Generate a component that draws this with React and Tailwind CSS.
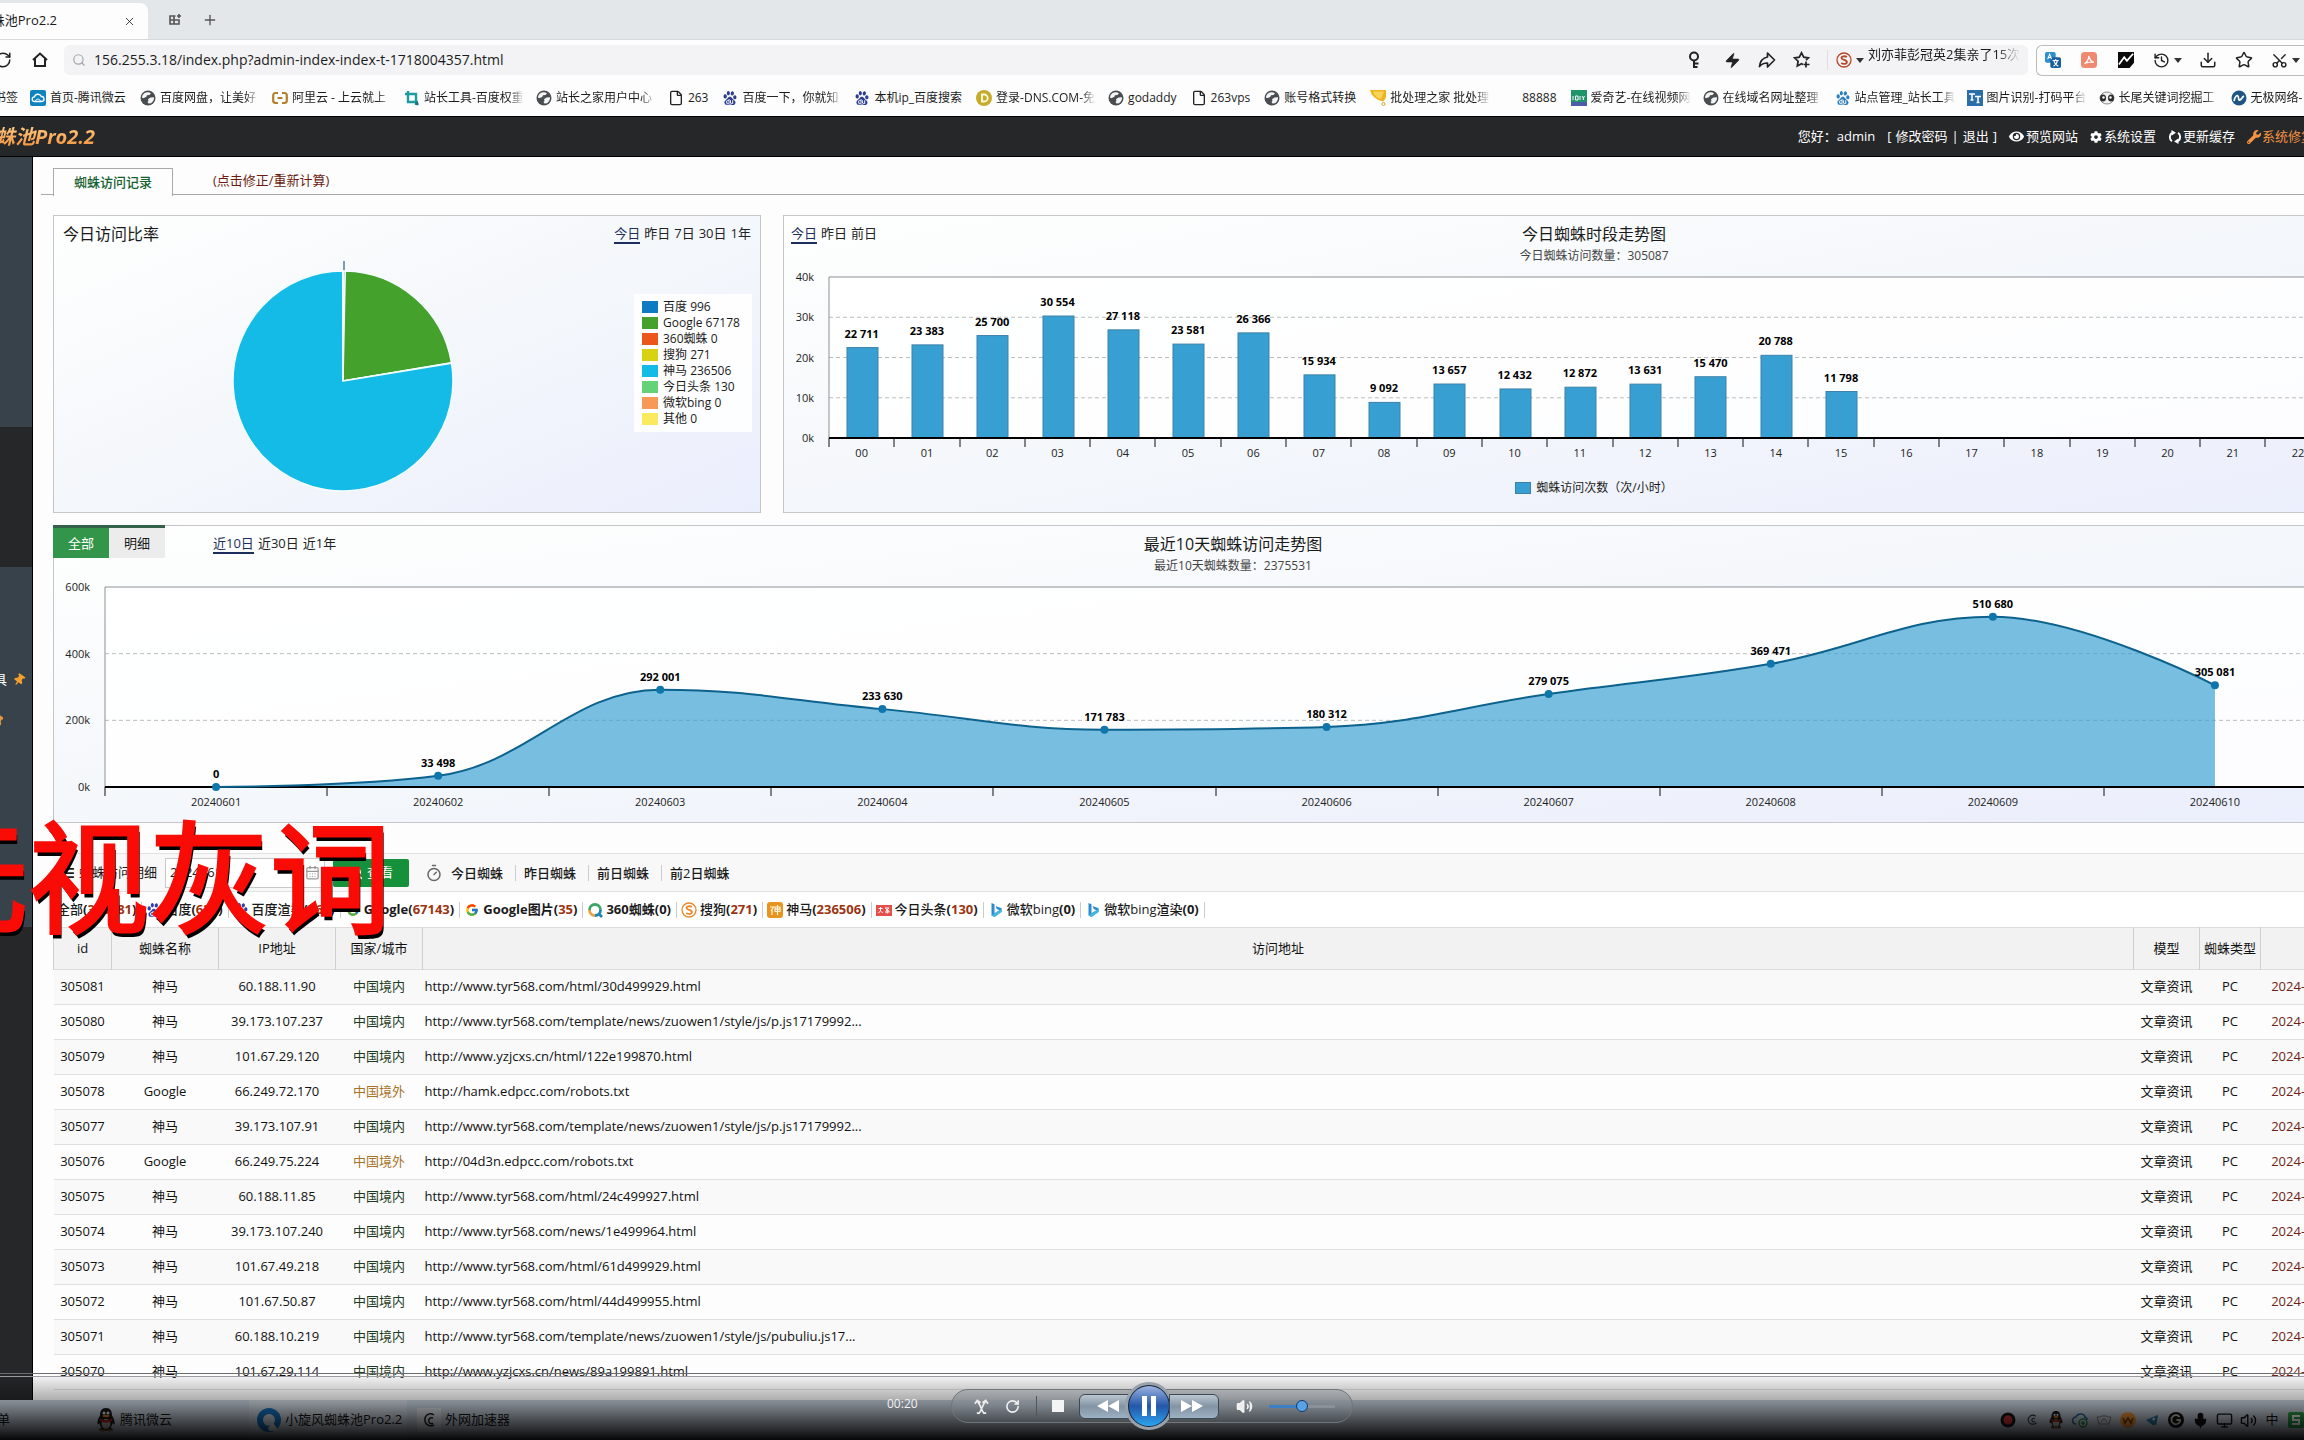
import { useLayoutEffect, useRef, useState } from 'react';
import {
  Search, X, Plus, RotateCw, File, Zap, Star, Download, Scissors, History, Volume2, Mic,
  Timer, AlignJustify, CalendarDays, Monitor,
} from 'lucide-react';
import { SiBaidu } from 'react-icons/si';
import { FcGoogle } from 'react-icons/fc';
import { FaEye, FaCog, FaWrench, FaThumbtack } from 'react-icons/fa';

const pieData = [
  { name: '百度', value: 996, color: '#0e7ac4' },
  { name: 'Google', value: 67178, color: '#44a12b' },
  { name: '360蜘蛛', value: 0, color: '#ed561b' },
  { name: '搜狗', value: 271, color: '#d8d312' },
  { name: '神马', value: 236506, color: '#14bbe6' },
  { name: '今日头条', value: 130, color: '#64d277' },
  { name: '微软bing', value: 0, color: '#f79a55' },
  { name: '其他', value: 0, color: '#fbea60' },
];

const hours = [22711, 23383, 25700, 30554, 27118, 23581, 26366, 15934, 9092, 13657, 12432, 12872, 13631, 15470, 20788, 11798];

const days = [
  ['20240601', 0],
  ['20240602', 33498],
  ['20240603', 292001],
  ['20240604', 233630],
  ['20240605', 171783],
  ['20240606', 180312],
  ['20240607', 279075],
  ['20240608', 369471],
  ['20240609', 510680],
  ['20240610', 305081],
];

const rows = [
  ['305081', '神马', '60.188.11.90', true, 'http://www.tyr568.com/html/30d499929.html'],
  ['305080', '神马', '39.173.107.237', true, 'http://www.tyr568.com/template/news/zuowen1/style/js/p.js17179992...'],
  ['305079', '神马', '101.67.29.120', true, 'http://www.yzjcxs.cn/html/122e199870.html'],
  ['305078', 'Google', '66.249.72.170', false, 'http://hamk.edpcc.com/robots.txt'],
  ['305077', '神马', '39.173.107.91', true, 'http://www.tyr568.com/template/news/zuowen1/style/js/p.js17179992...'],
  ['305076', 'Google', '66.249.75.224', false, 'http://04d3n.edpcc.com/robots.txt'],
  ['305075', '神马', '60.188.11.85', true, 'http://www.tyr568.com/html/24c499927.html'],
  ['305074', '神马', '39.173.107.240', true, 'http://www.tyr568.com/news/1e499964.html'],
  ['305073', '神马', '101.67.49.218', true, 'http://www.tyr568.com/html/61d499929.html'],
  ['305072', '神马', '101.67.50.87', true, 'http://www.tyr568.com/html/44d499955.html'],
  ['305071', '神马', '60.188.10.219', true, 'http://www.tyr568.com/template/news/zuowen1/style/js/pubuliu.js17...'],
  ['305070', '神马', '101.67.29.114', true, 'http://www.yzjcxs.cn/news/89a199891.html'],
];

const spaced = (n) => String(n).replace(/\B(?=(\d{3})+$)/g, ' ');

function useWidth() {
  const ref = useRef(null);
  const [width, setWidth] = useState(0);
  useLayoutEffect(() => {
    const el = ref.current;
    const update = () => setWidth(el.clientWidth);
    update();
    const ro = new ResizeObserver(update);
    ro.observe(el);
    return () => ro.disconnect();
  }, []);
  return [ref, width];
}

/* ---------- small icons ---------- */

const Globe = () => (
  <svg viewBox="0 0 16 16" className="w-4 h-4">
    <circle cx="8" cy="8" r="7.500" fill="#4a4d50" />
    <path d="M4 3.500c2-1.600 5-1.800 7-.3L9.500 5 7 5.200 6.200 7 3 8.200 2 7.400C2 5.800 3 4.300 4 3.500z M8 9.200l2.500-1.700 3.500-.2c.2 2.500-1 4.700-3 5.900l-2.500.4-1-1.600 1-1z" fill="#f4f5f6" />
  </svg>
);
const Cloud = () => (
  <svg viewBox="0 0 16 16" className="w-4 h-4">
    <rect width="16" height="16" rx="2" fill="#0d84c0" />
    <path d="M4.500 11.500a2.300 2.300 0 0 1 0-4.600A3.600 3.600 0 0 1 11.300 6.500a2.500 2.500 0 0 1 .4 5z" fill="none" stroke="#fff" strokeWidth="1.300" />
    <path d="M5.500 11c.5-2.500 4-2.500 5 0" fill="none" stroke="#fff" />
  </svg>
);
const Aliyun = () => (
  <svg viewBox="0 0 16 16" className="w-4 h-4" fill="none" stroke="#b3802a" strokeWidth="2.200">
    <path d="M6 3H3.500Q1.200 3 1.200 5.500v5Q1.200 13 3.500 13H6M10 3h2.500q2.300 0 2.300 2.500v5q0 2.500-2.300 2.500H10M5.500 8h5" />
  </svg>
);
const Tools = () => (
  <svg viewBox="0 0 16 16" className="w-4 h-4" fill="none" stroke="#1d9ba0" strokeWidth="2.400">
    <path d="M4 1v11h10M1 4h11v11" />
    <path d="M12 12l2 3" stroke="#23707e" />
  </svg>
);
const Coin = () => (
  <svg viewBox="0 0 16 16" className="w-4 h-4">
    <circle cx="8" cy="8" r="8" fill="#c6ac2c" />
    <path d="M6 4.500h2.200a3.500 3.500 0 0 1 0 7H6z" fill="none" stroke="#fffbe0" strokeWidth="1.800" />
  </svg>
);
const Badge = () => (
  <svg viewBox="0 0 16 16" className="w-4 h-4">
    <path d="M0 0h16v7q-1 3-3 4.500Q2 9 0 0z" fill="#eeb41c" />
    <path d="M3 1.500c1 4 4 6.500 8 7.500l3-7.500z" fill="#f9d458" />
    <circle cx="13.500" cy="14" r="1.500" fill="none" stroke="#d9a625" />
  </svg>
);
const Iqiyi = () => (
  <svg viewBox="0 0 16 16" className="w-4 h-4">
    <rect width="16" height="16" fill="#20946a" />
    <path d="M0 12h16v4H0z" fill="#4d5ca8" />
    <path d="M2 6v4M4.500 6h2.500v4H4.500zM9 6v4M11 6l1.300 2L13.600 6M12.300 8v2" stroke="#fff" fill="none" />
  </svg>
);
const Tt = () => (
  <svg viewBox="0 0 16 16" className="w-4 h-4">
    <rect width="16" height="16" fill="#2a6ea8" />
    <path d="M2 4h6M5 4v6M3.500 10h3M8 6.500h6M11 6.500v6M9.500 12.500h3" stroke="#fff" strokeWidth="1.500" />
  </svg>
);
const Panda = () => (
  <svg viewBox="0 0 16 16" className="w-4 h-4">
    <ellipse cx="8" cy="8" rx="7" ry="6" fill="#f1f1f1" stroke="#8a8a8a" />
    <ellipse cx="4" cy="8" rx="3" ry="3.500" fill="#2b2b2b" />
    <ellipse cx="12" cy="8" rx="3" ry="3.500" fill="#2b2b2b" />
    <circle cx="4.500" cy="7.500" r="1.200" fill="#fff" />
    <circle cx="11.500" cy="7.500" r="1.200" fill="#fff" />
  </svg>
);
const Wuji = () => (
  <svg viewBox="0 0 16 16" className="w-4 h-4">
    <circle cx="8" cy="8" r="7.500" fill="#1e5585" />
    <path d="M3 11c1-5 3-6 4-5s0 5 2 4 2-3 4-4" fill="none" stroke="#fff" strokeWidth="1.600" />
  </svg>
);
const Sogou = ({ color = '#e8892b' }) => (
  <svg viewBox="0 0 16 16" className="w-4 h-4" fill="none" stroke={color}>
    <circle cx="8" cy="8" r="7" strokeWidth="1.300" />
    <path d="M10.800 5.200C9.500 3.800 5.500 3.900 5.500 6s5.400 1.700 5.400 4-4 2.500-5.600.8" strokeWidth="1.800" />
  </svg>
);
const Ring360 = () => (
  <svg viewBox="0 0 16 16" className="w-4 h-4" fill="none" strokeWidth="2.800">
    <path d="M2.500 8A5.500 5.500 0 0 1 13.500 8" stroke="#3fa56b" />
    <path d="M2.500 8A5.500 5.500 0 0 0 8 13.500" stroke="#e9a43c" />
    <path d="M8 13.500A5.500 5.500 0 0 0 13.500 8M11 11l4 4" stroke="#1f86b5" />
  </svg>
);
const Shenma = () => (
  <svg viewBox="0 0 16 16" className="w-4 h-4">
    <rect width="16" height="16" rx="3" fill="#ea9420" />
    <path d="M3 5h3.500L4 9M5 7v6M8 5h5v4.500H8zM8 7.200h5M10.500 3v10" fill="none" stroke="#fff3d8" strokeWidth="1.200" />
  </svg>
);
const Toutiao = () => (
  <svg viewBox="0 0 16 16" className="w-4 h-4">
    <rect y="3" width="16" height="11" fill="#e5504c" />
    <path d="M2.500 6.500h4M4.500 5v4l-2 2M5.500 9.500l1 1.500M9 6h4l-3 3M9.500 6.500l4 3M11.200 8v3.500M9 10h4.500" stroke="#fff" fill="none" />
  </svg>
);
const Bing = () => (
  <svg viewBox="0 0 16 16" className="w-4 h-4">
    <path d="M3.500 1l3 1.200v9l5-3-2.700-1.300-1.200-3 6 2.300v3.500L6.500 15l-3-1.600z" fill="#2b8bd0" />
    <path d="M3.500 13.400L6.500 11.200 13.600 7v3L6.500 15z" fill="#46b7dd" />
  </svg>
);
const Translate = () => (
  <svg viewBox="0 0 18 18" className="w-4 h-4">
    <rect width="12" height="12" rx="2" fill="#2c8fcf" />
    <rect x="6" y="6" width="12" height="12" rx="2" fill="#185f9c" />
    <path d="M3 8l2.200-5.500L7.400 8M4 6.200h2.500M8.500 9.500h7M12 8v1.500M9.500 16c3-1.500 4-3.500 4.500-6.500M10 10c1 3 2.500 5 5 6" fill="none" stroke="#fff" strokeWidth="1.200" />
  </svg>
);
const Pdf = () => (
  <svg viewBox="0 0 18 18" className="w-4 h-4">
    <rect width="18" height="18" rx="4" fill="#ef8a70" />
    <path d="M4 13c2.500-1 5-5.500 4.700-8.500C10 9 12 11.500 14.500 11.500 11 11 7 11.500 4 13z" fill="none" stroke="#fff" strokeWidth="1.400" />
  </svg>
);
const Wave = () => (
  <svg viewBox="0 0 18 18" className="w-[18px] h-4">
    <path d="M0 0h18v12l-5 6H0z" fill="#0b0b0b" />
    <path d="M1 14L7 6l3 4 7-8" fill="none" stroke="#fff" strokeWidth="2" />
  </svg>
);
const Caret = () => (
  <svg viewBox="0 0 8 5" className="w-2 h-[5px]"><path d="M0 0h8L4 5z" fill="#333" /></svg>
);
const HomeIcon = () => (
  <svg viewBox="0 0 16 16" className="w-4 h-4" fill="none" stroke="#222" strokeWidth="2">
    <path d="M1 8L8 1.500 15 8M3 6.500V14h10V6.500" />
  </svg>
);
const KeyIcon = () => (
  <svg viewBox="0 0 18 18" className="w-[18px] h-[18px]" fill="none" stroke="#222" strokeWidth="2">
    <circle cx="9" cy="5.500" r="4" />
    <path d="M9 9.500V17M9 12.500h4.500M9 16h3.500" />
  </svg>
);
const ShareIcon = () => (
  <svg viewBox="0 0 18 18" className="w-[18px] h-[18px]" fill="none" stroke="#222" strokeWidth="1.700" strokeLinejoin="round">
    <path d="M9.500 2L16.500 9l-7 7v-4C6 12 3.500 13 1.500 15.500 2 11 4.500 7 9.500 6z" />
  </svg>
);
const StarPlus = () => (
  <svg viewBox="0 0 18 18" className="w-[18px] h-[18px]" fill="none" stroke="#222" strokeWidth="1.700">
    <path d="M10 13.500L8.500 12.700 4.300 15l.8-4.800L1.600 6.800l4.700-.7 2.200-4.300 2.200 4.300 4.700.7-2.400 2.400M13 10.500v6M10.500 13.500h6" />
  </svg>
);
const Refresh = () => (
  <svg viewBox="0 0 16 16" className="w-[14px] h-4" fill="none" stroke="#fff" strokeWidth="2.200">
    <path d="M4.500 12.800A6 6 0 0 1 4.500 3.200M11.500 3.200a6 6 0 0 1 0 9.600" />
    <path d="M4 0l5 3-5 3.500zM12 16l-5-3 5-3.500z" fill="#fff" stroke="none" />
  </svg>
);
const Penguin = ({ className }) => (
  <svg viewBox="0 0 20 24" className={className}>
    <path d="M10 0C5.500 0 4 3.500 4 7.500 2.500 10 1 13 1.500 16c.5 1 1.300 0 2-1 .3 2 1 3.500 2 4.500-2 .8-2.500 2-2 3 1 1 5 1 6.500 0 1.500 1 5.500 1 6.500 0 .5-1 0-2.200-2-3 1-1 1.700-2.500 2-4.500.7 1 1.500 2 2 1 .5-3-1-6-2.500-8.500C16 3.500 14.500 0 10 0z" fill="#15151a" />
    <ellipse cx="10" cy="16" rx="4.500" ry="5" fill="#b9b3ac" />
    <path d="M4 10.500q6 3 12 0l.5 2.500q-6.500 3.500-13 0z" fill="#a8281c" />
    <circle cx="8" cy="5" r="1.500" fill="#ddd" /><circle cx="12" cy="5" r="1.500" fill="#ddd" />
    <ellipse cx="10" cy="8" rx="3.500" ry="1.200" fill="#cc7a1a" />
    <path d="M4 22h5M11 22h5" stroke="#c2761f" strokeWidth="1.600" />
  </svg>
);

/* ---------- browser chrome ---------- */

function TabStrip() {
  return (
    <div className="flex h-10 shrink-0 items-end bg-[#e3e7ea] border-b border-[#d6dadd] text-[13px]">
      <div className="flex h-9 w-[148px] items-center justify-between rounded-tr-lg bg-[#fdfdfd] pr-3">
        <span className="flex w-[61px] justify-end whitespace-nowrap overflow-hidden pr-1">蛛池Pro2.2</span>
        <button aria-label="关闭"><X size={13} strokeWidth={1.5} /></button>
      </div>
      <button aria-label="分组" className="ml-5 h-7 self-center">
        <svg viewBox="0 0 14 14" className="w-[14px] h-[14px]" fill="none" stroke="#555" strokeWidth="1.600">
          <path d="M2 3h4v8H2zM6 7h5v4H6M2 7h4M6 3h1.500M11 1v4M9 3h4" />
        </svg>
      </button>
      <button aria-label="新标签" className="ml-5 h-7 self-center"><Plus size={16} strokeWidth={2} color="#555" /></button>
    </div>
  );
}

function AddressRow() {
  return (
    <div className="flex h-10 shrink-0 items-center bg-[#fdfdfd]">
      <div className="flex w-16 shrink-0 items-center">
        <button aria-label="刷新" className="-ml-1.5"><RotateCw size={18} strokeWidth={2} color="#222" /></button>
        <button aria-label="主页" className="ml-5"><HomeIcon /></button>
      </div>
      <div className="flex h-[30px] grow items-center rounded-md bg-[#f3f3f5] px-2">
        <Search size={14} color="#a5a5a8" className="shrink-0" />
        <input
          aria-label="地址"
          defaultValue="156.255.3.18/index.php?admin-index-index-t-1718004357.html"
          className="ml-2 grow bg-transparent text-sm text-[#1c1c1c] outline-none"
        />
        <div className="flex items-center gap-[17px] text-[#222]">
          <button aria-label="密码"><KeyIcon /></button>
          <button aria-label="极速" className="ml-1"><Zap size={17} fill="#222" strokeWidth={1} /></button>
          <button aria-label="分享"><ShareIcon /></button>
          <button aria-label="收藏"><StarPlus /></button>
        </div>
        <div className="ml-4 flex h-5 items-center border-l border-[#ddd] pl-2">
          <Sogou color="#b5472a" />
          <span className="px-1"><Caret /></span>
          <span className="mb-3 w-[152px] overflow-hidden whitespace-nowrap text-[13px] leading-5 mask-r-from-85%">刘亦菲彭冠英2集亲了15次</span>
        </div>
      </div>
      <div className="ml-2 flex h-[31px] w-[268px] shrink-0 items-center rounded-l-md border border-r-0 border-[#bbb] pl-2 text-[#222]">
        <button aria-label="翻译" className="w-9"><Translate /></button>
        <button aria-label="PDF" className="w-9"><Pdf /></button>
        <button aria-label="加速" className="w-9"><Wave /></button>
        <button aria-label="历史" className="flex w-[46px] items-center gap-1"><History size={17} /><Caret /></button>
        <button aria-label="下载" className="w-9"><Download size={18} /></button>
        <button aria-label="收藏夹" className="w-9"><Star size={18} /></button>
        <button aria-label="截图" className="flex items-center gap-1"><Scissors size={17} className="-rotate-90" /><Caret /></button>
      </div>
    </div>
  );
}

const bookmarks = [
  [Cloud, '首页-腾讯微云'],
  [Globe, '百度网盘，让美好', true],
  [Aliyun, '阿里云 - 上云就上', true],
  [Tools, '站长工具-百度权重', true],
  [Globe, '站长之家用户中心', true],
  [() => <File size={18} color="#222" />, '263'],
  [() => <SiBaidu size={14} color="#2a3d8f" />, '百度一下，你就知', true],
  [() => <SiBaidu size={14} color="#2a3d8f" />, '本机ip_百度搜索'],
  [Coin, '登录-DNS.COM-免', true],
  [Globe, 'godaddy'],
  [() => <File size={18} color="#222" />, '263vps'],
  [Globe, '账号格式转换'],
  [Badge, '批处理之家 批处理', true],
  [() => null, '88888'],
  [Iqiyi, '爱奇艺-在线视频网', true],
  [Globe, '在线域名网址整理', true],
  [() => <SiBaidu size={14} color="#2c7fbd" />, '站点管理_站长工具', true],
  [Tt, '图片识别-打码平台', true],
  [Panda, '长尾关键词挖掘工', true],
  [Wuji, '无极网络-', true],
];

function Bookmarks() {
  return (
    <div className="flex h-9 shrink-0 items-center overflow-hidden bg-[#fdfdfd] text-xs text-[#1c1c1c]">
      <span className="flex w-[18px] shrink-0 justify-end whitespace-nowrap overflow-hidden">书签</span>
      {bookmarks.map(([Icon, label, cut], i) => (
        <a key={i} href="#" className="ml-3 flex shrink-0 items-center gap-1 whitespace-nowrap">
          <span className="flex w-4 justify-center"><Icon /></span>
          <span className={cut ? 'w-[100px] overflow-hidden mask-r-from-85%' : 'pr-0.5'}>{label}</span>
        </a>
      ))}
    </div>
  );
}

/* ---------- admin page ---------- */

function Header() {
  return (
    <header className="flex h-[41px] shrink-0 items-center justify-between border-y border-black bg-[#262729] text-[13px] text-white">
      <div className="flex w-[97px] justify-end">
        <span className="bg-linear-to-b from-[#ffd08a] to-[#f08a2c] bg-clip-text pr-0.5 text-xl font-bold italic whitespace-nowrap text-transparent">蛛池Pro2.2</span>
      </div>
      <nav className="-mr-[10px] flex items-center gap-3 whitespace-nowrap">
        <span>您好：admin</span>
        <span className="flex gap-1">[ <a href="#">修改密码</a>|<a href="#">退出</a> ]</span>
        <a href="#" className="flex items-center gap-0.5"><FaEye size={15} />预览网站</a>
        <a href="#" className="flex items-center gap-0.5"><FaCog size={12} />系统设置</a>
        <a href="#" className="flex items-center gap-px"><Refresh />更新缓存</a>
        <a href="#" className="flex items-center gap-px text-[#f59343]"><FaWrench size={14} />系统修复</a>
      </nav>
    </header>
  );
}

function Sidebar() {
  return (
    <aside className="flex w-[33px] shrink-0 flex-col border-r border-black bg-[#262729] text-[13px] text-white">
      <div className="h-[270px] shrink-0 bg-[#37424b]" />
      <div className="h-[140px] shrink-0" />
      <div className="h-[360px] shrink-0 bg-[#37424b] pt-[102px]">
        <a href="#" className="flex h-[22px] items-center">
          <span className="flex w-[7px] justify-end overflow-hidden">具</span>
          <FaThumbtack size={12} color="#f5a02c" className="ml-1.5 rotate-[35deg]" />
        </a>
        <div className="mt-6 w-[3px] overflow-hidden"><FaThumbtack size={12} color="#e8963a" className="-ml-2 rotate-[35deg]" /></div>
      </div>
      <div className="grow" />
    </aside>
  );
}

function Ranges({ items }) {
  return (
    <div className="flex items-start gap-1 text-[13px] leading-[18px] text-[#222] whitespace-nowrap">
      {items.map((t, i) => (
        <a key={t} href="#" className={i === 0 ? 'border-b-2 border-[#1c2f5c] text-[#1c2f5c]' : 'border-b-2 border-transparent'}>{t}</a>
      ))}
    </div>
  );
}

function PiePanel() {
  const total = pieData.reduce((s, d) => s + d.value, 0);
  const r = 110;
  let acc = 0;
  const slices = pieData.filter((d) => d.value > 0).map((d) => {
    const a0 = (acc / total) * Math.PI * 2;
    acc += d.value;
    const a1 = (acc / total) * Math.PI * 2;
    const p = (a) => `${r * Math.sin(a)} ${-r * Math.cos(a)}`;
    return { ...d, d: `M0 0L${p(a0)}A${r} ${r} 0 ${a1 - a0 > Math.PI ? 1 : 0} 1 ${p(a1)}Z` };
  });
  return (
    <section className="flex h-[298px] w-[708px] shrink-0 flex-col border border-[#c4c6c9] bg-linear-to-br from-[#fefffe] via-[#f4f7fb] to-[#ebeefc]">
      <div className="flex items-start justify-between px-[9px] pt-2">
        <h2 className="text-base leading-5">今日访问比率</h2>
        <Ranges items={['今日', '昨日', '7日', '30日', '1年']} />
      </div>
      <div className="flex grow items-start justify-between pr-2">
        <svg viewBox="-115 -125 230 240" className="ml-[174px] mt-3 w-[230px] h-[240px]">
          <path d="M1 -120V-108" stroke="#4a7fa0" strokeWidth="1.500" />
          {slices.map((s) => <path key={s.name} d={s.d} fill={s.color} stroke="#f4fcff" strokeWidth="1.500" />)}
        </svg>
        <ul className="mt-[50px] w-[118px] bg-white/90 py-[5px] pl-2 text-xs leading-4 whitespace-nowrap">
          {pieData.map((d) => (
            <li key={d.name} className="flex items-center gap-[5px]">
              <span className="h-3 w-4" style={{ background: d.color }} />
              {d.name} {d.value}
            </li>
          ))}
        </ul>
      </div>
    </section>
  );
}

function PlotFrame({ left, right, top, bottom, max, step, ticks }) {
  const y = (v) => bottom - (v / max) * (bottom - top);
  const lines = [];
  for (let v = 0; v <= max; v += step) lines.push(v);
  const slot = (right - left) / ticks;
  return (
    <g>
      <rect x={left} y={top} width={right - left} height={bottom - top} fill="#fff" fillOpacity="0.85" />
      {lines.map((v) => (
        <g key={v}>
          {v > 0 && v < max && <path d={`M${left} ${y(v)}H${right}`} stroke="#bcbcbc" strokeDasharray="4 3" />}
          <text x={left - 15} y={y(v) + 4} textAnchor="end">{v / 1000}k</text>
        </g>
      ))}
      <path d={`M${left} ${bottom}V${top}H${right}V${bottom}`} fill="none" stroke="#8d9094" />
      {Array.from({ length: ticks + 1 }, (_, i) => (
        <path key={i} d={`M${Math.round(left + i * slot)} ${bottom}v9`} stroke="#111" />
      ))}
    </g>
  );
}

function HourPanel() {
  const [ref, w] = useWidth();
  const left = 45;
  const right = w - 8;
  const bottom = 162;
  const slot = (right - left) / 24;
  const h = (v) => (v / 40000) * 161;
  return (
    <section className="h-[298px] grow border border-[#c4c6c9] bg-linear-to-br from-[#fefffe] via-[#f4f7fb] to-[#ebeefc]">
      <div className="grid grid-cols-[1fr_auto_1fr] items-start px-[7px] pt-2">
        <Ranges items={['今日', '昨日', '前日']} />
        <div className="text-center">
          <h2 className="text-base leading-5">今日蜘蛛时段走势图</h2>
          <p className="text-xs leading-6 text-[#444]">今日蜘蛛访问数量：305087</p>
        </div>
      </div>
      <div ref={ref} className="mt-2">
        {w > 0 && (
          <svg width={w} height="190" className="block overflow-visible text-[11px] fill-[#222]">
            <PlotFrame left={left} right={right} top={1} bottom={bottom} max={40000} step={10000} ticks={24} />
            {hours.map((v, i) => {
              const cx = left + (i + 0.5) * slot;
              return (
                <g key={i}>
                  <rect x={Math.round(cx) - 15} y={bottom - h(v) + 1} width="31" height={h(v) - 1} fill="#389fd3" stroke="#3c82a8" />
                  <text x={cx} y={bottom - h(v) - 9} textAnchor="middle" className="font-bold fill-black">{spaced(v)}</text>
                </g>
              );
            })}
            {Array.from({ length: 24 }, (_, i) => (
              <text key={i} x={left + (i + 0.5) * slot} y={bottom + 19} textAnchor="middle">{String(i).padStart(2, '0')}</text>
            ))}
            <path d={`M${left} ${bottom}H${right}`} stroke="#000" strokeWidth="2" />
          </svg>
        )}
      </div>
      <div className="mt-3 flex items-center justify-center gap-[5px] text-xs leading-5">
        <span className="h-3 w-4 bg-[#389fd3] border border-[#3c82a8]" />
        蜘蛛访问次数（次/小时）
      </div>
    </section>
  );
}

// spline with horizontal extremes, control points never overshoot the neighbours
function splinePath(pts) {
  let d = `M${pts[0].x} ${pts[0].y}`;
  let prevRight = pts[0];
  for (let i = 1; i < pts.length; i++) {
    const p = pts[i];
    const last = pts[i - 1];
    const next = pts[i + 1];
    let lc = p;
    let rc = p;
    if (next) {
      const lx = (1.5 * p.x + last.x) / 2.5;
      const rx = (1.5 * p.x + next.x) / 2.5;
      let ly = (1.5 * p.y + last.y) / 2.5;
      let ry = (1.5 * p.y + next.y) / 2.5;
      const corr = ((ry - ly) * (rx - p.x)) / (rx - lx) + p.y - ry;
      ly += corr;
      ry += corr;
      if (ly > last.y && ly > p.y) {
        ly = Math.max(last.y, p.y);
        ry = 2 * p.y - ly;
      } else if (ly < last.y && ly < p.y) {
        ly = Math.min(last.y, p.y);
        ry = 2 * p.y - ly;
      }
      if (ry > next.y && ry > p.y) {
        ry = Math.max(next.y, p.y);
        ly = 2 * p.y - ry;
      } else if (ry < next.y && ry < p.y) {
        ry = Math.min(next.y, p.y);
        ly = 2 * p.y - ry;
      }
      lc = { x: lx, y: ly };
      rc = { x: rx, y: ry };
    }
    d += `C${prevRight.x} ${prevRight.y} ${lc.x} ${lc.y} ${p.x} ${p.y}`;
    prevRight = rc;
  }
  return d;
}

function TrendPanel() {
  const [ref, w] = useWidth();
  const left = 51;
  const right = w - 78;
  const bottom = 201;
  const slot = (right - left) / days.length;
  const pts = days.map(([, v], i) => ({ x: left + (i + 0.5) * slot, y: bottom - (v / 600000) * 200 }));
  const line = splinePath(pts);
  return (
    <section className="mt-3 h-[298px] border border-[#c4c6c9] bg-linear-to-br from-[#fefffe] via-[#f4f7fb] to-[#ebeefc]">
      <div className="grid grid-cols-[1fr_auto_1fr] pl-2">
        <div className="-ml-[9px] flex items-start">
          <div className="-mt-px flex border-t-3 border-[#35614a] text-[13px] leading-[30px]">
            <button className="w-14 bg-[#32954a] text-white">全部</button>
            <button className="w-14 bg-[#ececed]">明细</button>
          </div>
          <div className="mt-2 ml-12"><Ranges items={['近10日', '近30日', '近1年']} /></div>
        </div>
        <div className="pt-2 text-center">
          <h2 className="text-base leading-5">最近10天蜘蛛访问走势图</h2>
          <p className="text-xs leading-6 text-[#444]">最近10天蜘蛛数量：2375531</p>
        </div>
      </div>
      <div ref={ref} className="mt-2">
        {w > 0 && (
          <svg width={w} height="230" className="block overflow-visible text-[11px] fill-[#222]">
            <PlotFrame left={left} right={right} top={1} bottom={bottom} max={600000} step={200000} ticks={10} />
            <path d={`${line}V${bottom}H${pts[0].x}Z`} fill="#389fd3" fillOpacity="0.68" />
            <path d={`M${left} ${bottom}H${right}`} stroke="#000" strokeWidth="2" />
            <path d={line} fill="none" stroke="#0d628d" strokeWidth="2" />
            {pts.map((p, i) => (
              <g key={i}>
                <circle cx={p.x} cy={p.y} r="4" fill="#0f76ab" />
                <text x={p.x} y={p.y - 9} textAnchor="middle" className="font-bold fill-black">{spaced(days[i][1])}</text>
                <text x={p.x} y={bottom + 19} textAnchor="middle">{days[i][0]}</text>
              </g>
            ))}
          </svg>
        )}
      </div>
    </section>
  );
}

const spiders = [
  [null, '全部', 305081],
  [() => <SiBaidu size={14} color="#2f3fa8" />, '百度', 631],
  [() => <SiBaidu size={14} color="#2f3fa8" />, '百度渲染', 365],
  [() => <FcGoogle size={14} />, 'Google', 67143],
  [() => <FcGoogle size={14} />, 'Google图片', 35],
  [Ring360, '360蜘蛛', 0],
  [Sogou, '搜狗', 271],
  [Shenma, '神马', 236506],
  [Toutiao, '今日头条', 130],
  [Bing, '微软bing', 0],
  [Bing, '微软bing渲染', 0],
];

function FilterBar() {
  return (
    <form className="flex h-[39px] items-center border-y border-[#e2e2e2] bg-[#f8f8f8] pl-2 text-[13px]">
      <AlignJustify size={14} strokeWidth={3} />
      <label htmlFor="day" className="ml-1">蜘蛛访问明细</label>
      <div className="ml-2 flex h-[30px] w-[160px] items-center border border-[#c9c9c9] bg-white px-1">
        <input id="day" defaultValue="20240610" className="w-full min-w-0 outline-none" />
        <CalendarDays size={15} color="#999" className="shrink-0" />
      </div>
      <button type="button" className="ml-2 flex h-7 w-[76px] items-center justify-center gap-1 rounded-xs bg-[#16913b] text-white">
        <Search size={14} strokeWidth={3} />查看
      </button>
      <Timer size={18} color="#666" className="ml-4" />
      {['今日蜘蛛', '昨日蜘蛛', '前日蜘蛛', '前2日蜘蛛'].map((t, i) => (
        <a key={t} href="#" className={`pl-2 leading-4 font-medium ${i < 3 ? 'border-r border-[#ccc] pr-3' : ''}`}>{t}</a>
      ))}
    </form>
  );
}

function SpiderLinks() {
  return (
    <div className="flex h-[35px] items-center bg-white pl-1 text-[13px] font-bold">
      {spiders.map(([Icon, name, n]) => (
        <a key={name} href="#" className="mr-1 flex h-4 items-center border-r border-[#ccc] pr-[5px] whitespace-nowrap">
          {Icon && <span className="mr-[3px] flex w-4 justify-center"><Icon /></span>}
          <span className={/^[A-Z3]/.test(name) ? '' : 'font-medium'}>{name}</span>(<span className={n ? 'text-[#9c3410]' : ''}>{n}</span>)
        </a>
      ))}
    </div>
  );
}

function LogTable() {
  return (
    <table className="w-full table-fixed border-collapse text-center text-[13px] text-[#111]">
      <colgroup>
        <col className="w-[58px]" />
        <col className="w-[107px]" />
        <col className="w-[117px]" />
        <col className="w-[87px]" />
        <col />
        <col className="w-[66px]" />
        <col className="w-[61px]" />
        <col className="w-36" />
      </colgroup>
      <thead>
        <tr className="h-[42px] border-y border-[#dcdcdc] bg-[#f2f2f2]">
          {['id', '蜘蛛名称', 'IP地址', '国家/城市', '访问地址', '模型', '蜘蛛类型', '访问时间'].map((t) => (
            <th key={t} className="border-x border-[#d0d0d0] font-normal whitespace-nowrap">{t}</th>
          ))}
        </tr>
      </thead>
      <tbody>
        {rows.map(([id, name, ip, inland, url]) => (
          <tr key={id} className="h-[35px] border-b border-[#e0e0e0] odd:bg-[#f9f9f9] even:bg-[#fdfdfd]">
            <td>{id}</td>
            <td>{name}</td>
            <td>{ip}</td>
            <td className={inland ? 'text-[#1d3b22]' : 'text-[#a8742a]'}>{inland ? '中国境内' : '中国境外'}</td>
            <td className="truncate pl-0.5 text-left">{url}</td>
            <td>文章资讯</td>
            <td>PC</td>
            <td className="whitespace-nowrap text-[#6e2415]">2024-06-10 15:59:37</td>
          </tr>
        ))}
      </tbody>
    </table>
  );
}

/* ---------- desktop task bar and player ---------- */

const tray = [
  <svg viewBox="0 0 16 16" className="w-4 h-4"><circle cx="8" cy="8" r="7.500" fill="#181818" /><circle cx="8" cy="8" r="4.500" fill="#d8343a" /></svg>,
  <svg viewBox="0 0 16 16" className="w-3 h-3" fill="none" stroke="#333" strokeWidth="1.500"><path d="M13 3C8-1 2 4 3 9s7 6 11 3M12 6c-3-1-5 1-4 3s3 2 4 1" /></svg>,
  <Penguin className="w-4 h-[18px]" />,
  <svg viewBox="0 0 18 16" className="w-[18px] h-4" fill="none" stroke="#2a5f8e" strokeWidth="1.500"><path d="M5 12a3.500 3.500 0 0 1 0-7 5 5 0 0 1 9.500 1M13 5a3 3 0 0 1 3 3" /><circle cx="12" cy="11" r="4" stroke="#2f8a4a" /><path d="M10 11h4M12 9v4" stroke="#2f8a4a" /></svg>,
  <svg viewBox="0 0 16 12" className="w-4 h-3" fill="none" stroke="#777"><path d="M1 3h3l2-1h4l2 1h3l-2 7H3zM5 8l2-3h2l2 3" /></svg>,
  <svg viewBox="0 0 16 16" className="w-4 h-4"><circle cx="8" cy="8" r="8" fill="#f0963a" /><path d="M3 6l2 5 3-5 3 5 2-5" fill="none" stroke="#7a3c05" strokeWidth="1.600" /></svg>,
  <svg viewBox="0 0 16 16" className="w-3.5 h-3.5"><path d="M1 8L15 2 13 13 9 14z" fill="#2a7a9c" /><circle cx="10" cy="7" r="1.500" fill="#cde" /></svg>,
  <svg viewBox="0 0 16 16" className="w-4 h-4"><circle cx="8" cy="8" r="8" fill="#111" /><path d="M11.500 5A4.500 4.500 0 1 0 12 9.500V8H8.500" fill="none" stroke="#ccc" strokeWidth="1.800" /></svg>,
  <Mic size={17} fill="#111" />,
  <Monitor size={17} />,
  <Volume2 size={17} />,
  <span>中</span>,
  <svg viewBox="0 0 16 16" className="w-4 h-4"><rect width="16" height="16" rx="2" fill="#2b9a45" /><path d="M12 4H5v4h6v4H4" fill="none" stroke="#fff" strokeWidth="2" /></svg>,
];

function Taskbar() {
  return (
    <div className="flex h-10 shrink-0 items-center bg-[#c6d0dc] text-[13px] text-[#111]">
      <span className="flex w-[10px] justify-end overflow-hidden">单</span>
      <button className="ml-[86px] flex items-center gap-1"><Penguin className="w-5 h-6" />腾讯微云</button>
      <button className="ml-[77px] flex h-10 w-[158px] items-center gap-1 bg-white/20 pl-2 whitespace-nowrap">
        <svg viewBox="0 0 24 24" className="w-6 h-6 shrink-0">
          <circle cx="12" cy="12" r="9" fill="none" stroke="#1673c4" strokeWidth="6" />
          <path d="M11 20l5-5 6 8H12z" fill="#e5edf5" />
        </svg>
        小旋风蜘蛛池Pro2.2
      </button>
      <button className="ml-2.5 flex items-center gap-1">
        <svg viewBox="0 0 24 24" className="w-6 h-6">
          <rect width="24" height="24" fill="#dde3e8" />
          <path d="M17 7c-4-3-10 0-9 6 .5 4 5 6 9 4M16 10c-3-1-5 1-4 4 1 2 3 2 4 1" fill="none" stroke="#222" strokeWidth="1.500" />
        </svg>
        外网加速器
      </button>
      <div className="-mr-1 ml-auto flex items-center">
        {tray.map((icon, i) => <span key={i} className="flex w-6 justify-center">{icon}</span>)}
      </div>
    </div>
  );
}

function Player() {
  return (
    <div className="absolute inset-x-0 bottom-0 h-[67px] border-t border-[#6c6c72]">
      <div className="h-full border-t border-[#9a9aa0] bg-linear-to-b from-black/5 via-black/35 via-40% to-black mt-0.5" />
      <div className="absolute inset-x-0 bottom-[10px] flex h-12 items-center justify-center text-[#f2f2f2]">
        <span className="mr-8 mb-1 w-8 text-xs">00:20</span>
        <div className="mr-16 flex h-[34px] w-[402px] items-center rounded-full border border-[#70767c] bg-linear-to-b from-[#a3a6aa]/80 via-[#7c838a]/80 to-[#4a4f54]/80 pl-[22px]">
          <button aria-label="随机">
            <svg viewBox="0 0 16 16" className="w-[15px] h-[15px]" fill="none" stroke="#eee" strokeWidth="1.800"><path d="M3 15h2.500C8 13 8 8 12 3M13 15h-2.500C8 13 8 8 4 3M1 5l2.500-3.500L7 4M9 4l3.500-2.500L15 5" /></svg>
          </button>
          <button aria-label="循环" className="ml-4"><RotateCw size={15} strokeWidth={2.5} /></button>
          <span className="ml-4 h-5 w-px bg-[#555]" />
          <button aria-label="停止" className="ml-[15px] h-3 w-3 bg-[#f4f4f4]" />
          <div className="ml-[15px] flex items-center">
            <button aria-label="后退" className="flex h-[25px] w-[50px] items-center justify-center rounded-l-md border border-[#3c4a58] bg-linear-to-b from-[#bcc6d0] via-[#8394a4] via-50% to-[#9db2c4] pl-2">
              <svg viewBox="0 0 22 12" className="w-[22px] h-3" fill="#fff"><path d="M11 0v12L0 6zM22 0v12L11 6z" /></svg>
            </button>
            <button aria-label="暂停" className="-mx-1 flex h-[48px] w-[48px] items-center justify-center rounded-full border-3 border-[#99a2aa] bg-[#17233c] p-px">
              <span className="flex h-full w-full items-center justify-center gap-1 rounded-full bg-linear-to-b from-[#9db4e0] via-[#2456a8] via-50% to-[#2aa5f0]">
                <i className="h-5 w-[5px] bg-white" /><i className="h-5 w-[5px] bg-white" />
              </span>
            </button>
            <button aria-label="前进" className="flex h-[25px] w-[50px] items-center justify-center rounded-r-md border border-[#3c4a58] bg-linear-to-b from-[#bcc6d0] via-[#8394a4] via-50% to-[#9db2c4] pr-1">
              <svg viewBox="0 0 22 12" className="w-[22px] h-3" fill="#fff"><path d="M0 0v12l11-6zM11 0v12l11-6z" /></svg>
            </button>
          </div>
          <button aria-label="音量" className="ml-[17px]"><Volume2 size={17} fill="#eee" /></button>
          <input
            type="range"
            aria-label="音量调节"
            defaultValue="50"
            className="ml-4 h-[3px] w-[66px] appearance-none bg-linear-to-r from-[#3c7fc4] from-50% to-[#8a9096] to-50% [&::-webkit-slider-thumb]:h-3 [&::-webkit-slider-thumb]:w-3 [&::-webkit-slider-thumb]:appearance-none [&::-webkit-slider-thumb]:rounded-full [&::-webkit-slider-thumb]:border [&::-webkit-slider-thumb]:border-[#123a70] [&::-webkit-slider-thumb]:bg-[#5aa2e6]"
          />
        </div>
      </div>
    </div>
  );
}

export default function App() {
  return (
    <div className="relative flex h-screen flex-col overflow-hidden bg-[#fdfdfd] font-['Open_Sans','Noto_Sans_CJK_SC',sans-serif] text-[#1a1a1a]">
      <TabStrip />
      <AddressRow />
      <Bookmarks />
      <Header />
      <div className="flex min-h-0 grow">
        <Sidebar />
        <main className="-mr-[101px] min-w-0 grow overflow-hidden pt-2.5">
          <div className="flex items-end text-[13px]">
            <span className="ml-2 w-3 border-b border-[#a9a9a9]" />
            <button className="-mb-px h-7 w-[120px] border border-b-0 border-[#a9a9a9] font-medium text-[#14602f]">蜘蛛访问记录</button>
            <div className="flex h-7 grow items-center border-b border-[#a9a9a9] pl-10">
              <a href="#" className="text-[#6b1c10]">(点击修正/重新计算)</a>
            </div>
          </div>
          <div className="mt-5 ml-5">
            <div className="flex gap-[22px]">
              <PiePanel />
              <HourPanel />
            </div>
            <TrendPanel />
            <div className="mt-[30px]">
              <FilterBar />
              <SpiderLinks />
              <LogTable />
            </div>
          </div>
        </main>
      </div>
      <Taskbar />
      <div className="pointer-events-none absolute top-[786px] -left-[93px] text-[121px] leading-[180px] whitespace-nowrap text-[#f90b06] [-webkit-text-stroke:3px_#f90b06] [text-shadow:2px_5px_0_#000]">无视灰词</div>
      <Player />
    </div>
  );
}
